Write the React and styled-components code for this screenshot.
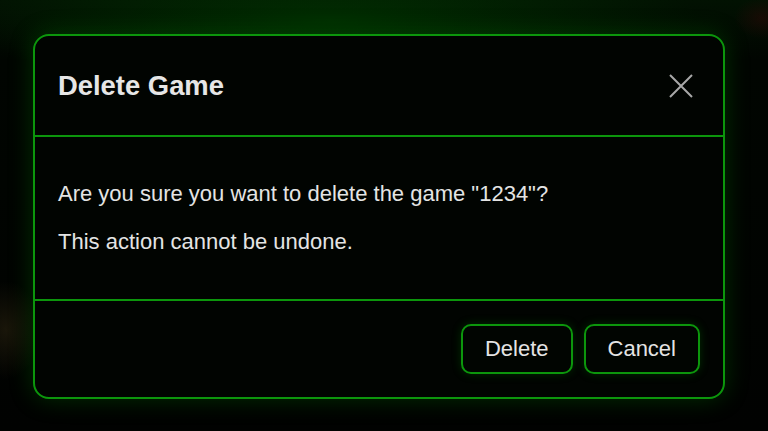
import styled, { createGlobalStyle } from "styled-components";

const GlobalStyle = createGlobalStyle`
    html, body {
        margin: 0;
        padding: 0;
        background: #020402;
    }
    body {
        font-family: "Liberation Sans", Arial, sans-serif;
    }
`;

// Blurred page behind the dialog, only some coloured blobs are left of it.
const Backdrop = styled.div`
    min-height: 100vh;
    box-sizing: border-box;
    padding: 34px 43px 32px 33px;
    background:
        radial-gradient(ellipse 40px 30px at 762px 18px, rgba(50, 8, 8, 0.45), transparent 70%),
        radial-gradient(ellipse 50px 70px at 6px 330px, rgba(55, 45, 20, 0.45), transparent 70%),
        radial-gradient(ellipse 460px 90px at 330px 20px, rgba(0, 70, 0, 0.55), transparent 80%),
        linear-gradient(180deg, #021202 0px, #010501 60px, #010201 100%);
`;

const Modal = styled.div`
    border: 2px solid #0c960c;
    border-radius: 16px;
    background: #010401;
    box-shadow: 0 0 24px rgba(0, 160, 0, 0.28);
    color: #e4e4e4;
    overflow: hidden;
`;

const Header = styled.div`
    display: flex;
    align-items: center;
    justify-content: space-between;
    height: 99px;
    padding: 0 30px 0 23px;
    border-bottom: 2px solid #0c960c;
`;

const Title = styled.h2`
    margin: 0;
    font-size: 27.4px;
    font-weight: 700;
    color: #e6e6e6;
`;

const CloseButton = styled.button`
    display: flex;
    padding: 0;
    border: none;
    background: none;
    cursor: pointer;
`;

const Body = styled.div`
    display: flex;
    flex-direction: column;
    gap: 16px;
    padding: 41px 23px;
    border-bottom: 2px solid #0c960c;
`;

const Text = styled.p`
    margin: 0;
    font-size: 22px;
    line-height: 32px;
    color: #e4e4e4;
`;

const Footer = styled.div`
    display: flex;
    justify-content: flex-end;
    align-items: center;
    gap: 11px;
    height: 96px;
    padding: 0 23px;
`;

const Button = styled.button`
    height: 50px;
    padding: 0 22px;
    border: 2px solid #0c960c;
    border-radius: 10px;
    background: #010501;
    box-shadow: 0 0 10px rgba(0, 160, 0, 0.25);
    color: #e4e4e4;
    font-family: "Liberation Sans", Arial, sans-serif;
    font-size: 22px;
    cursor: pointer;
`;

const CloseIcon = () => (
    <svg width="24" height="24" viewBox="0 0 24 24">
        <path
            d="M1 1 L23 23 M23 1 L1 23"
            stroke="#a8a8a8"
            strokeWidth="2"
            fill="none"
        />
    </svg>
);

const App = () => (
    <>
        <GlobalStyle />
        <Backdrop>
            <Modal>
                <Header>
                    <Title>Delete Game</Title>
                    <CloseButton type="button" aria-label="Close">
                        <CloseIcon />
                    </CloseButton>
                </Header>
                <Body>
                    <Text>Are you sure you want to delete the game "1234"?</Text>
                    <Text>This action cannot be undone.</Text>
                </Body>
                <Footer>
                    <Button type="button">Delete</Button>
                    <Button type="button">Cancel</Button>
                </Footer>
            </Modal>
        </Backdrop>
    </>
);

export default App;
